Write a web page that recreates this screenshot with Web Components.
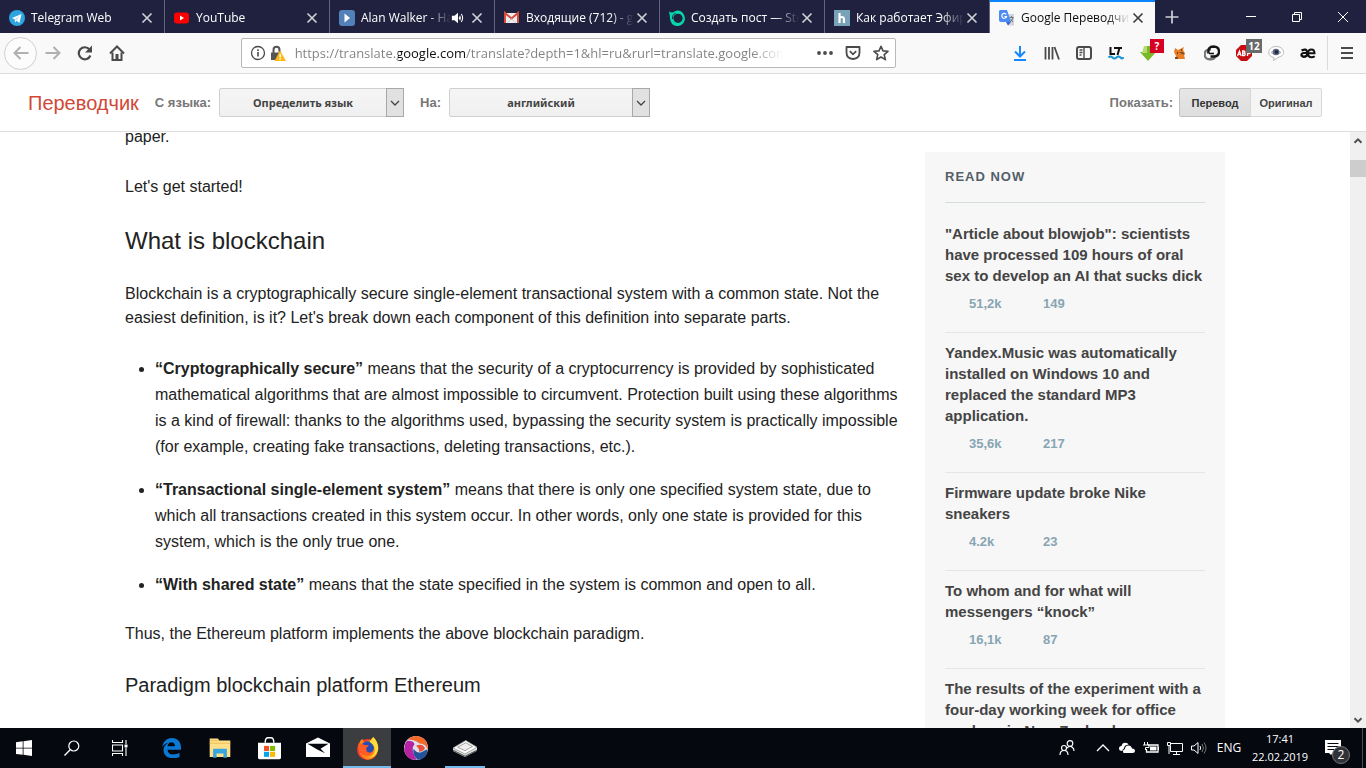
<!DOCTYPE html>
<html lang="ru">
<head>
<meta charset="utf-8">
<title>Google Переводчик</title>
<style>
    html, body { height: 100%; margin: 0; }
    body {
        display: flex;
        flex-direction: column;
        overflow: hidden;
        background: #fff;
        color: #222;
        font-family: "Liberation Sans", Arial, sans-serif;
        --chrome-font: "Open Sans", "Noto Sans", sans-serif;
    }
</style>
</head>
<body>
<tab-strip>
    <browser-tab icon="telegram">Telegram Web</browser-tab>
    <browser-tab icon="youtube">YouTube</browser-tab>
    <browser-tab icon="play" audio>Alan Walker - Ha</browser-tab>
    <browser-tab icon="gmail">Входящие (712) - gr</browser-tab>
    <browser-tab icon="steemit">Создать пост — Ste</browser-tab>
    <browser-tab icon="habr">Как работает Эфир</browser-tab>
    <browser-tab icon="translate" active>Google Переводчик</browser-tab>
</tab-strip>
<nav-bar></nav-bar>
<translate-bar></translate-bar>
<page-view>
    <article-text></article-text>
    <read-now slot="aside">
        <news-item views="51,2k" comments="149">"Article about blowjob": scientists have processed 109 hours of oral sex to develop an AI that sucks dick</news-item>
        <news-item views="35,6k" comments="217">Yandex.Music was automatically installed on Windows 10 and replaced the standard MP3 application.</news-item>
        <news-item views="4.2k" comments="23">Firmware update broke Nike sneakers</news-item>
        <news-item views="16,1k" comments="87">To whom and for what will messengers “knock”</news-item>
        <news-item>The results of the experiment with a four-day working week for office workers in New Zealand</news-item>
    </read-now>
</page-view>
<task-bar></task-bar>

<script>
const ICONS = {
    telegram: '<circle cx="8" cy="8" r="8" fill="#2ca5e0"/><path d="M3 8l9.5-4-2 9-3-2.200-1.500 1.700-.2-3z" fill="#fff"/><path d="M5.800 9.500l5-4.200-3.500 5.200z" fill="#b8dcf0"/>',
    youtube: '<rect y="2.500" width="15" height="11" rx="3" fill="#f00"/><path d="M6 5.500v5l4-2.500z" fill="#fff"/>',
    play: '<rect width="16" height="16" rx="3" fill="#5181b8"/><path d="M5.500 3.500v9l5.500-4.500z" fill="#fff"/>',
    gmail: '<path d="M1 3h13v10H1z" fill="#eee"/><path d="M1 13V3l6.500 5.500L14 3v10" fill="none" stroke="#d54b3d" stroke-width="2"/><path d="M3 13l4.500-4 4.500 4" fill="none" stroke="#ccc"/>',
    steemit: '<path d="M0 1.500Q3.500 3.500 5.500 1.500 10-1 13.500 2.500q3.500 4 2 8.500-2.500 5.500-8 5Q1.500 15 1 8.500.8 5 0 1.500z" fill="#06d6a9"/><circle cx="9" cy="8.300" r="4.600" fill="#20213f"/><path d="M6.500 3Q3 5 3.500 9" fill="none" stroke="#20213f"/>',
    habr: '<path d="M0 0h16v16H0z" fill="#78a2b7"/><path d="M5.500 3v10M5.500 9q.3-2 2.300-2 2.200 0 2.200 2.500V13" fill="none" stroke="#fff" stroke-width="2.200"/>',
    translate: '<path d="M6 4h9v11.500H9z" fill="#d5d5d5"/><path d="M1 0h7l4 12H2q-2 0-2-2V1z" fill="#4d8bf5"/><path d="M7 12h5l-3 3.500z" fill="#3367d6"/><path d="M7.200 4.500a2.400 2.400 0 1 0 .3 2H5.500" fill="none" stroke="#fff" stroke-width="1.200"/><path d="M10.500 7.500h4M12.500 6v1.500M11 12q2.500-1.500 3-4.500M11.500 9l2.500 3" fill="none" stroke="#607988"/>',
    close: '<path d="M3.500 3.500l9 9m0-9l-9 9" stroke="currentColor" stroke-width="1.600"/>',
    plus: '<path d="M8 1.500v13M1.500 8h13" stroke="currentColor" stroke-width="1.700"/>',
    audio: '<path d="M1 5.500h3l4-3.500v12l-4-3.500H1z" fill="currentColor"/><path d="M10 5.500q1.500 2.500 0 5M11.800 3.500q3 4.500 0 9M9.600 7v2" fill="none" stroke="currentColor" stroke-width="1.200"/>',
    minimize: '<path d="M3 7.500h10" stroke="currentColor"/>',
    restore: '<path d="M3.500 5.500h7v7h-7zM5.500 5V3.500h7v7H11" fill="none" stroke="currentColor"/>',
    winclose: '<path d="M3 3l10 10M13 3L3 13" stroke="currentColor"/>',
    back: '<path d="M15.500 8H1.500M7.500 2L1.500 8l6 6" fill="none" stroke="currentColor" stroke-width="2"/>',
    forward: '<path d="M.5 8h14M8.500 2l6 6-6 6" fill="none" stroke="currentColor" stroke-width="2"/>',
    reload: '<path d="M13.400 10.500A6 6 0 1 1 12.500 4.500" fill="none" stroke="currentColor" stroke-width="2.200"/><path d="M15 .5v7H8z" fill="currentColor"/>',
    home: '<path d="M1 8.500L8 1.500l7 7" fill="none" stroke="currentColor" stroke-width="2"/><path d="M3.500 7.500V15h9V7.500" fill="none" stroke="currentColor" stroke-width="2"/><path d="M6.500 9h3v6h-3z" fill="currentColor"/>',
    info: '<circle cx="8" cy="8" r="6.500" fill="none" stroke="currentColor" stroke-width="1.300"/><path d="M8 7v4.500M8 4.300v1.600" stroke="currentColor" stroke-width="1.600"/>',
    lock: '<path d="M3.500 8V5q0-3.200 3-3.200t3 3.200v2" fill="none" stroke="#555" stroke-width="2"/><path d="M1 7.500h9.500v7.500H1z" fill="#555"/><path d="M10 5.500l6 10.500H4.500z" fill="#fcb813"/><path d="M10.200 9v3.500M10.200 13.300v1.500" stroke="#fff" stroke-width="1.400"/>',
    dots: '<g fill="currentColor"><circle cx="2" cy="8" r="1.900"/><circle cx="8" cy="8" r="1.900"/><circle cx="14" cy="8" r="1.900"/></g>',
    pocket: '<path d="M1.500 2h13v5.500q0 6-6.500 6.500-6.500-.5-6.500-6.500z" fill="none" stroke="currentColor" stroke-width="1.800" stroke-linejoin="round"/><path d="M4.800 6.200L8 9.300l3.200-3.100" fill="none" stroke="currentColor" stroke-width="1.800"/>',
    star: '<path d="M8 1.300l2 4.600 5 .4-3.800 3.300 1.200 5L8 12l-4.400 2.600 1.200-5L1 6.300l5-.4z" fill="none" stroke="currentColor" stroke-width="1.600" stroke-linejoin="round"/>',
    download: '<path d="M8 1v10.500M3 6.500L8 11.500l5-5M2 15h12" fill="none" stroke="#1687ff" stroke-width="2"/>',
    library: '<path d="M1.500 2v12.500M5 2v12.500M8.500 2v12.500M10.500 2l4.500 12.500" stroke="currentColor" stroke-width="1.800"/>',
    sidebar: '<rect x="1" y="2" width="14" height="12" rx="2" fill="none" stroke="currentColor" stroke-width="2"/><path d="M8 2v12M3.500 5h3M3.500 7.500h3M3.500 10h2" stroke="currentColor" stroke-width="1.400"/>',
    langtool: '<path d="M2.500 2v7H7M6 3h8M11.500 3l-2 7" fill="none" stroke="#111" stroke-width="2"/><path d="M.5 12.500q2-2 4 0t4 0 4 0 3-.5" fill="none" stroke="#1594d2" stroke-width="2"/>',
    savefrom: '<path d="M4 1h8v6h4l-8 9-8-9h4z" fill="#79b928"/><path d="M4 1h3v7H2z" fill="#b5dc70"/>',
    fox: '<path d="M3 3l3 2 6-3-1 3 2 3-1 2 1 4H3l1-3-2-4z" fill="#e97d24"/><path d="M7 7h4l2 3-3-1zM3 12h3v2H3z" fill="#7b4a2b"/><path d="M9 5h1M5 8h1" stroke="#40281a" stroke-width="1.500"/>',
    link: '<path d="M7 4.500H5.500a4.800 4.800 0 0 0 0 9.800H7q3 0 4-2.500" fill="none" stroke="#777" stroke-width="2.400"/><path d="M4.500 8.500Q3.500 1.500 9.500 1.500q5.500.3 5.500 5 0 5-5.500 5H6.500" fill="none" stroke="#161616" stroke-width="2.400"/><path d="M5 8.500h5" stroke="#161616" stroke-width="1.600"/>',
    stop: '<path d="M5 0h6l5 5v6l-5 5H5l-5-5V5z" fill="#c70d12"/><path d="M1.500 11l2-5 1.700 5M2.400 9.400h2.200M6.700 6v4.500h1.800q1.500-.7 0-2.300 1-1.500-.3-2.200zM6.500 8.200h2M11.500 11V6h2q1.500 1.500 0 2.500h-2" fill="none" stroke="#fff" stroke-width="1.300"/>',
    eye: '<path d="M8 1.500c9 0 10 9.500 3 10.500L5.500 15.500 6 12.500C-2.500 11 0 1.500 8 1.500z" fill="#fff" stroke="#bbb"/><path d="M3 7.500q5-5 10 0-5 4-10 0z" fill="#ddd" stroke="#999" stroke-width=".7"/><circle cx="8" cy="7" r="3.300" fill="#57637f"/><circle cx="8.500" cy="7" r="1.800" fill="#20243d"/>',
    ae: '<path d="M1.500 5.500Q7 3 7 7v4.500M7 8H3.500Q1 8.500 1.500 10.500 3.500 13 7 10.500" fill="none" stroke="#111" stroke-width="2.200"/><path d="M8.500 8.300h6Q14.500 4.500 11.500 4.500 8 4.500 8 8.300q0 4 3.500 4 2 0 3.200-1" fill="none" stroke="#111" stroke-width="2"/>',
    menu: '<path d="M2 3h12M2 8h12M2 13h12" stroke="currentColor" stroke-width="1.800"/>',
    chevdown: '<path d="M4 6l4 4 4-4" fill="none" stroke="currentColor" stroke-width="1.300"/>',
    scrollup: '<path d="M4.500 10.800L8 7.300l3.500 3.500" fill="none" stroke="currentColor" stroke-width="2"/>',
    scrolldown: '<path d="M4.500 6.200L8 9.700l3.500-3.500" fill="none" stroke="currentColor" stroke-width="2"/>',
    windows: '<path d="M0 2.300l6.700-1v6.400H0zM7.500 1.200L16 0v7.700H7.500zM0 8.400h6.700v6.400L0 13.900zM7.500 8.400H16V16l-8.500-1.200z" fill="#fff"/>',
    search: '<circle cx="9.800" cy="6" r="5" fill="none" stroke="#fff" stroke-width="1.200"/><path d="M6.200 9.800L.5 15.500" stroke="#fff" stroke-width="1.400"/>',
    taskview: '<path d="M.5 0v2.500h10V0M.5 16v-2.500h10V16M.5 5h10v6H.5zM14 0v4M14 8v8" fill="none" stroke="#fff" stroke-width="1.100"/><path d="M12.500 4.500h3v3h-3z" fill="#fff"/>',
    edge: '<path d="M.8 7.200C2 2.500 5 0 8.700 0 13.500 0 16 3.500 16 7.500v1.800H5.200c.2 2.700 2 3.900 4.600 3.900 2 0 3.800-.6 5-1.400v3.300c-1.500.7-3.500 1-5.200 1C5 16.100 2 13.300 2 9.500 2 6.500 4 4.700 6 3.700 3.800 4 2 5.200.8 7.200zM5.200 6.500h6C11.200 4.500 10 3.300 8.300 3.300c-1.700 0-2.800 1.400-3.100 3.200z" fill="#0b78d4"/>',
    folder: '<path d="M.5 1h6l1 1.500h8v12H.5z" fill="#ffdf88"/><path d="M1 2.500h6M.5 4.500h15" stroke="#e9b94e" stroke-width=".6"/><path d="M3 15V8.500h10V15H10.500v-3h-5v3z" fill="#35a6de"/>',
    store: '<path d="M0 4h16v10.500q0 1-1 1H1q-1 0-1-1z" fill="#fff"/><path d="M5 4Q5 .5 7 .5h2Q11 .5 11 4" fill="none" stroke="#fff"/><path d="M4.200 6.200h3.500v3.500H4.200z" fill="#f25022"/><path d="M8.400 6.200h3.500v3.500H8.400z" fill="#7fba00"/><path d="M4.200 10.300h3.500v3.500H4.200z" fill="#00a4ef"/><path d="M8.400 10.300h3.500v3.500H8.400z" fill="#ffb900"/>',
    mail: '<path d="M0 5l8-4 8 4v9H0z" fill="#fff"/><path d="M1 5.200h14L9.700 8.500l3 3L7.500 9z" fill="#05080f"/>',
    firefox: '<circle cx="8" cy="8.700" r="7.300" fill="#f23a33"/><path d="M2 5Q3 2 4.500 1.300 4.500 3 6 3.500L10 2 12 0q4 4 3.300 9.500Q13 16.500 7 15.500 1 13 2 5z" fill="#ff8b16"/><circle cx="8" cy="7.500" r="4.500" fill="#274bb2"/><path d="M12 0q4.500 5 3.200 9.500-2 5-6.700 5 5-2 4.500-6-.2-3-3.500-5z" fill="#ffdf36"/><path d="M2 4l4 1.500 3 .3-2 2 .5 2.200q2 1.500 3.500 0 0 3-4 3Q1.500 12.500 1.500 6z" fill="#ff5b24"/>',
    swirl: '<circle cx="8" cy="8" r="8" fill="#dee1ed"/><path d="M2.500 2.500Q8-2.500 14 2.500q2.500 3 1.800 6.500Q14.500 5 10.500 5 7 2 2.500 2.500z" fill="#f4692a"/><path d="M2 3.200Q6.500 3 7 5.500 4 9 8.500 15.800 2 16.500.3 10-.3 6 2 3.200z" fill="#b722a2"/><path d="M6.500 8.500q1.500 3 5 2.300l4-2q.3 6.700-6.500 7-4-4-2.500-7.300z" fill="#24539b"/><path d="M8 6.500Q12 4.500 14 8q-1 2.500-4 2.500.5-2-2-4z" fill="#e75238"/>',
    drive: '<path d="M0 8L8.500 3 16 7.500v2.300L8 14 0 10z" fill="#e8e8e8"/><path d="M0 8L8.500 3 16 7.500 8 12z" fill="#fff" stroke="#888" stroke-width=".5"/><path d="M3 7.500L8.500 4.500 13 7 8 9.800z" fill="#eee" stroke="#888" stroke-width=".5"/><path d="M0 9.500l8 4 8-4" fill="none" stroke="#555" stroke-width=".7"/>',
    people: '<g fill="none" stroke="#fff" stroke-width="1.200"><circle cx="5" cy="8" r="2.500"/><path d="M1 15q0-4.500 4-4.500T9 15"/><circle cx="11" cy="3.500" r="2.800"/><path d="M8 8q3-3 5.500-.5 1.500 1 1.500 3.500"/></g>',
    chevup: '<path d="M2 11l6-6 6 6" fill="none" stroke="#fff" stroke-width="1.300"/>',
    cloud: '<path d="M3.500 11Q0 11 0 8.500 0 6 2.500 6q1-4 5-3 1.500.3 2 1.500Q5 5 5 8.500 3 9 3.500 11z" fill="#fff"/><path d="M4.500 13Q3 10 6 9q0-3.500 3.500-3.500 2.700 0 3.500 3 3 0 3 2.500 0 2-2.500 2z" fill="#fff"/>',
    battery: '<path d="M5 5h10v7H3.500V9M15.500 7v3" fill="none" stroke="#fff" stroke-width="1.300"/><path d="M7 6.500h6.500v4H7z" fill="#fff"/><path d="M1.500 2v3M4.500 2v3M0 5h6v2.500H2.500V10" fill="none" stroke="#fff"/>',
    network: '<path d="M4 3.500h11.500v8H3.500V6M9.500 11.500V14M6 14.500h7M.5 2.500h3v3h-3zM2 5.500V14" fill="none" stroke="#fff"/>',
    volume: '<path d="M.5 6H3l4-3.500v11L3 10H.5z" fill="none" stroke="#fff"/><path d="M9 6q1.300 2 0 4" fill="none" stroke="#fff"/><path d="M11 4q3 4 0 8M13 2.500q4 5.500 0 11" fill="none" stroke="#777"/>',
    notes: '<path d="M0 0h16v13H8l-2 2-2-2H0z" fill="#fff"/><path d="M2.500 3.500h11M2.500 6.500h11M2.500 9.500h7" stroke="#05080f"/>'
};

class UiIcon extends HTMLElement {
    constructor() {
        super();
        this.attachShadow({ mode: 'open' });
    }

    connectedCallback() {
        const size = this.getAttribute('size') || 16;
        this.shadowRoot.innerHTML = `
            <style>
                :host { display: inline-block; flex: none; width: ${size}px; height: ${size}px; }
                svg { display: block; }
            </style>
            <svg viewBox="0 0 16 16" width="${size}" height="${size}" aria-hidden="true">${ICONS[this.getAttribute('name')]}</svg>
        `;
    }
}

class TabStrip extends HTMLElement {
    constructor() {
        super();
        this.attachShadow({ mode: 'open' });
        this.shadowRoot.innerHTML = `
            <style>
                :host {
                    display: flex;
                    flex: none;
                    height: 33px;
                    background: #20213f;
                    color: #fff;
                }
                button {
                    width: 46px;
                    padding: 0;
                    border: none;
                    background: none;
                    color: inherit;
                }
                .new { width: 34px; color: #d0d0d8; }
                .window { display: flex; margin-left: auto; }
                button ui-icon { vertical-align: middle; }
            </style>
            <slot></slot>
            <button class="new" aria-label="Новая вкладка"><ui-icon name="plus"></ui-icon></button>
            <div class="window">
                <button aria-label="Свернуть"><ui-icon name="minimize"></ui-icon></button>
                <button aria-label="Развернуть"><ui-icon name="restore"></ui-icon></button>
                <button aria-label="Закрыть"><ui-icon name="winclose"></ui-icon></button>
            </div>
        `;
    }
}

class BrowserTab extends HTMLElement {
    constructor() {
        super();
        this.attachShadow({ mode: 'open' });
    }

    connectedCallback() {
        this.shadowRoot.innerHTML = `
            <style>
                :host {
                    display: flex;
                    align-items: center;
                    flex: 0 1 165px;
                    min-width: 0;
                    box-sizing: border-box;
                    padding: 2px 9px 0;
                    border-right: 1px solid #62637c;
                    font: 12px/20px var(--chrome-font);
                    color: #fff;
                }
                :host([active]) {
                    padding-top: 0;
                    border-top: 2px solid #0a84ff;
                    border-right: none;
                    background: #f9f9fa;
                    color: #0c0c0d;
                }
                .title {
                    flex: 1;
                    min-width: 0;
                    margin-left: 6px;
                    overflow: hidden;
                    white-space: nowrap;
                    mask-image: linear-gradient(to left, transparent, #000 24px);
                }
                button {
                    flex: none;
                    width: 16px;
                    height: 16px;
                    padding: 0;
                    border: none;
                    background: none;
                    color: inherit;
                    opacity: .8;
                }
                button ui-icon { display: block; }
                ui-icon[name="audio"] { margin-right: 4px; }
            </style>
            <ui-icon name="${this.getAttribute('icon')}"></ui-icon>
            <span class="title"><slot></slot></span>
            ${this.hasAttribute('audio') ? '<ui-icon name="audio" size="14"></ui-icon>' : ''}
            <button aria-label="Закрыть вкладку"><ui-icon name="close"></ui-icon></button>
        `;
    }
}

class NavBar extends HTMLElement {
    constructor() {
        super();
        this.attachShadow({ mode: 'open' });
        this.shadowRoot.innerHTML = `
            <style>
                :host {
                    display: flex;
                    flex: none;
                    align-items: center;
                    height: 40px;
                    padding: 0 3px 0 4px;
                    border-bottom: 1px solid #dcdcdc;
                    background: #f9f9fa;
                    color: #4a4a4c;
                }
                button {
                    display: grid;
                    place-items: center;
                    position: relative;
                    flex: none;
                    width: 32px;
                    height: 34px;
                    padding: 0;
                    border: none;
                    background: none;
                    color: inherit;
                }
                .back {
                    box-sizing: border-box;
                    width: 33px;
                    height: 33px;
                    border: 1px solid #cfcfcf;
                    border-radius: 50%;
                    background: #fcfcfc;
                }
                .off { color: #b0b0b1; }
                .space { flex: 1; }
                .url {
                    display: flex;
                    align-items: center;
                    flex: 6;
                    gap: 4px;
                    min-width: 0;
                    box-sizing: border-box;
                    height: 30px;
                    padding: 0 0 0 8px;
                    border: 1px solid #b8b8b8;
                    border-radius: 2px;
                    background: #fff;
                }
                .url input {
                    flex: 1;
                    min-width: 0;
                    margin: 0 24px 0 5px;
                    padding: 0;
                    border: none;
                    outline: none;
                    font: 13px/24px var(--chrome-font);
                    /* the host part of the address is drawn darker */
                    background: linear-gradient(to right, #808080 103px, #0c0c0d 103px 171px, #808080 171px);
                    background-clip: text;
                    -webkit-background-clip: text;
                    -webkit-text-fill-color: transparent;
                    mask-image: linear-gradient(to left, transparent, #000 32px);
                }
                .url button { width: 28px; height: 28px; }
                .url .end { display: flex; }
                .badge {
                    position: absolute;
                    top: 3px;
                    left: 18px;
                    min-width: 14px;
                    font: bold 10px/14px var(--chrome-font);
                    text-align: center;
                    background: #d70022;
                    color: #fff;
                }
                .grey { background: #686a6b; min-width: 16px; }
                .sep { width: 1px; height: 34px; margin: 0 3px; background: #dadada; }
            </style>
            <button class="back off" aria-label="Назад"><ui-icon name="back"></ui-icon></button>
            <button class="off" aria-label="Вперёд"><ui-icon name="forward"></ui-icon></button>
            <button aria-label="Обновить"><ui-icon name="reload"></ui-icon></button>
            <button aria-label="Домой"><ui-icon name="home"></ui-icon></button>
            <span class="space"></span>
            <div class="url">
                <ui-icon name="info"></ui-icon>
                <ui-icon name="lock"></ui-icon>
                <input type="text" aria-label="Адрес" value="https://translate.google.com/translate?depth=1&amp;hl=ru&amp;rurl=translate.google.com">
                <span class="end">
                    <button aria-label="Действия"><ui-icon name="dots"></ui-icon></button>
                    <button aria-label="Pocket"><ui-icon name="pocket"></ui-icon></button>
                    <button aria-label="Закладка"><ui-icon name="star"></ui-icon></button>
                </span>
            </div>
            <span class="space"></span>
            <button aria-label="Загрузки"><ui-icon name="download"></ui-icon></button>
            <button aria-label="Библиотека"><ui-icon name="library"></ui-icon></button>
            <button aria-label="Боковая панель"><ui-icon name="sidebar"></ui-icon></button>
            <button aria-label="LanguageTool"><ui-icon name="langtool"></ui-icon></button>
            <button aria-label="SaveFrom"><ui-icon name="savefrom"></ui-icon><span class="badge">?</span></button>
            <button aria-label="MetaMask"><ui-icon name="fox"></ui-icon></button>
            <button aria-label="Ссылки"><ui-icon name="link"></ui-icon></button>
            <button aria-label="Adblock"><ui-icon name="stop"></ui-icon><span class="badge grey">12</span></button>
            <button aria-label="Просмотр"><ui-icon name="eye"></ui-icon></button>
            <button aria-label="Словарь"><ui-icon name="ae"></ui-icon></button>
            <span class="sep"></span>
            <button aria-label="Меню"><ui-icon name="menu"></ui-icon></button>
        `;
    }
}

class TranslateBar extends HTMLElement {
    constructor() {
        super();
        this.attachShadow({ mode: 'open' });
        this.shadowRoot.innerHTML = `
            <style>
                :host {
                    display: flex;
                    flex: none;
                    align-items: center;
                    height: 57px;
                    padding: 0 44px 0 28px;
                    border-bottom: 1px solid #ddd;
                    background: #fff;
                    white-space: nowrap;
                }
                .logo {
                    margin-right: 16px;
                    font-size: 20px;
                    line-height: 24px;
                    text-decoration: none;
                    color: #d14836;
                }
                label, .label {
                    margin-right: 8px;
                    font: bold 13px/18px "Liberation Sans", Arial, sans-serif;
                    color: #777;
                }
                .label { margin-right: 6px; }
                .select { display: grid; width: 185px; margin-right: 16px; }
                .wide { width: 201px; }
                .select > * { grid-area: 1 / 1; }
                select {
                    appearance: none;
                    box-sizing: border-box;
                    width: 100%;
                    height: 29px;
                    padding: 0 17px 0 0;
                    border: 1px solid #d0d0d0;
                    border-radius: 2px;
                    background: linear-gradient(#f5f5f5, #f0f0f0);
                    font: bold 11px/16px "Noto Sans", sans-serif;
                    text-align: center;
                    text-align-last: center;
                    color: #444;
                }
                .arrow {
                    display: grid;
                    place-items: center;
                    justify-self: end;
                    box-sizing: border-box;
                    width: 18px;
                    height: 29px;
                    border: 1px solid #a8a8a8;
                    background: #e1e1e1;
                    color: #444;
                    pointer-events: none;
                }
                .show { display: flex; align-items: center; margin-left: auto; }
                button {
                    box-sizing: border-box;
                    width: 72px;
                    height: 29px;
                    padding: 0;
                    border: 1px solid #d8d8d8;
                    border-radius: 0 2px 2px 0;
                    background: #f5f5f5;
                    font: bold 11px/16px "Liberation Sans", Arial, sans-serif;
                    color: #444;
                }
                .on {
                    margin-right: -1px;
                    border-color: #c0c0c0;
                    border-radius: 2px 0 0 2px;
                    background: linear-gradient(#e6e6e6, #dedede);
                    color: #333;
                }
            </style>
            <a class="logo" href="#">Переводчик</a>
            <label for="from">С языка:</label>
            <span class="select">
                <select id="from"><option>Определить язык</option></select>
                <span class="arrow"><ui-icon name="chevdown"></ui-icon></span>
            </span>
            <label for="to">На:</label>
            <span class="select wide">
                <select id="to"><option>английский</option></select>
                <span class="arrow"><ui-icon name="chevdown"></ui-icon></span>
            </span>
            <div class="show">
                <span class="label">Показать:</span>
                <button class="on">Перевод</button>
                <button>Оригинал</button>
            </div>
        `;
    }
}

class PageView extends HTMLElement {
    constructor() {
        super();
        this.attachShadow({ mode: 'open' });
        this.shadowRoot.innerHTML = `
            <style>
                :host {
                    display: flex;
                    flex: 1;
                    min-height: 0;
                    overflow: hidden;
                }
                .content { flex: 1; min-width: 0; overflow: hidden; }
                .columns {
                    display: grid;
                    grid-template-columns: minmax(0, 1fr) 300px;
                    gap: 24px;
                    max-width: 1100px;
                    margin: 0 auto;
                }
                .scroll {
                    display: flex;
                    flex-direction: column;
                    width: 16px;
                    background: #f0f0f0;
                    color: #505050;
                }
                .thumb { height: 17px; margin-top: 12px; background: #cdcdcd; }
                .scroll ui-icon:last-child { margin-top: auto; }
            </style>
            <div class="content">
                <div class="columns">
                    <slot></slot>
                    <slot name="aside"></slot>
                </div>
            </div>
            <div class="scroll">
                <ui-icon name="scrollup"></ui-icon>
                <div class="thumb"></div>
                <ui-icon name="scrolldown"></ui-icon>
            </div>
        `;
    }
}

class ArticleText extends HTMLElement {
    constructor() {
        super();
        this.attachShadow({ mode: 'open' });
        this.shadowRoot.innerHTML = `
            <style>
                :host {
                    display: block;
                    margin-top: -7px;
                    font-size: 16px;
                    line-height: 24px;
                }
                p { margin: 0 0 26px; }
                h2, h3 { margin: 0 0 25px; font-weight: normal; }
                h2 { font-size: 24px; line-height: 32px; }
                h3 { font-size: 20px; line-height: 26px; }
                ul { margin: 0 0 24px; padding-left: 30px; line-height: 26px; }
                li { margin-bottom: 17px; }
            </style>
            <p>paper.</p>
            <p>Let's get started!</p>
            <h2>What is blockchain</h2>
            <p>Blockchain is a cryptographically secure single-element transactional system with a common state. Not the easiest definition, is it? Let's break down each component of this definition into separate parts.</p>
            <ul>
                <li><b>“Cryptographically secure”</b> means that the security of a cryptocurrency is provided by sophisticated mathematical algorithms that are almost impossible to circumvent. Protection built using these algorithms is a kind of firewall: thanks to the algorithms used, bypassing the security system is practically impossible (for example, creating fake transactions, deleting transactions, etc.).</li>
                <li><b>“Transactional single-element system”</b> means that there is only one specified system state, due to which all transactions created in this system occur. In other words, only one state is provided for this system, which is the only true one.</li>
                <li><b>“With shared state”</b> means that the state specified in the system is common and open to all.</li>
            </ul>
            <p>Thus, the Ethereum platform implements the above blockchain paradigm.</p>
            <h3>Paradigm blockchain platform Ethereum</h3>
        `;
    }
}

class ReadNow extends HTMLElement {
    constructor() {
        super();
        this.attachShadow({ mode: 'open' });
        this.shadowRoot.innerHTML = `
            <style>
                :host {
                    display: block;
                    margin-top: 20px;
                    padding: 15px 20px;
                    background: #f7f7f7;
                }
                h4 {
                    margin: 0 0 11px;
                    padding-bottom: 15px;
                    border-bottom: 1px solid #d5dddf;
                    font-size: 13px;
                    line-height: 20px;
                    letter-spacing: 1px;
                    text-transform: uppercase;
                    color: #545f68;
                }
            </style>
            <h4>Read now</h4>
            <slot></slot>
        `;
    }
}

class NewsItem extends HTMLElement {
    constructor() {
        super();
        this.attachShadow({ mode: 'open' });
    }

    connectedCallback() {
        const views = this.getAttribute('views');
        this.shadowRoot.innerHTML = `
            <style>
                :host {
                    display: block;
                    padding: 9px 0 19px;
                    border-bottom: 1px solid #e3e6e8;
                    font-weight: bold;
                }
                a {
                    display: block;
                    margin-bottom: 9px;
                    font-size: 15px;
                    line-height: 21px;
                    text-decoration: none;
                    color: #444;
                }
                .stats {
                    display: grid;
                    grid-template-columns: 74px 74px;
                    padding-left: 24px;
                    font-size: 13px;
                    line-height: 18px;
                    color: #87a5b3;
                }
            </style>
            <a href="#"><slot></slot></a>
            ${views ? `<div class="stats"><span>${views}</span><span>${this.getAttribute('comments')}</span></div>` : ''}
        `;
    }
}

class TaskBar extends HTMLElement {
    constructor() {
        super();
        this.attachShadow({ mode: 'open' });
        this.shadowRoot.innerHTML = `
            <style>
                :host {
                    display: flex;
                    flex: none;
                    height: 40px;
                    background: #05080f;
                    color: #fff;
                    font: 12px/18px var(--chrome-font);
                }
                div { display: flex; }
                button {
                    display: grid;
                    place-items: center;
                    position: relative;
                    width: 48px;
                    padding: 0;
                    border: none;
                    background: none;
                    color: inherit;
                    font: inherit;
                }
                .apps { gap: 1px; margin-left: 3px; }
                .active { background: #3b3d41; box-shadow: inset 0 -2px #76b9ed; }
                .open { width: 40px; margin: 0 4px; box-shadow: inset 0 -2px #76b9ed; }
                .tray { margin-left: auto; }
                .tray button { width: 24px; }
                .tray .people { width: 48px; }
                .tray .lang { width: 36px; }
                .tray .clock {
                    width: 66px;
                    font-size: 11px;
                    align-content: center;
                }
                .tray .notes {
                    width: 50px;
                    margin-right: 3px;
                    padding-right: 10px;
                    border-right: 1px solid #4a4c52;
                }
                .count {
                    position: absolute;
                    right: 12px;
                    bottom: 4px;
                    width: 16px;
                    border: 1px solid #777;
                    border-radius: 50%;
                    line-height: 16px;
                    background: #303237;
                }
            </style>
            <div>
                <button aria-label="Пуск"><ui-icon name="windows"></ui-icon></button>
                <button aria-label="Поиск"><ui-icon name="search"></ui-icon></button>
                <button aria-label="Представление задач"><ui-icon name="taskview"></ui-icon></button>
            </div>
            <div class="apps">
                <button aria-label="Edge"><ui-icon name="edge" size="20"></ui-icon></button>
                <button aria-label="Проводник"><ui-icon name="folder" size="22"></ui-icon></button>
                <button aria-label="Store"><ui-icon name="store" size="23"></ui-icon></button>
                <button aria-label="Почта"><ui-icon name="mail" size="24"></ui-icon></button>
                <button class="active" aria-label="Firefox"><ui-icon name="firefox" size="23"></ui-icon></button>
                <button aria-label="Браузер"><ui-icon name="swirl" size="24"></ui-icon></button>
                <button class="open" aria-label="Диск"><ui-icon name="drive" size="24"></ui-icon></button>
            </div>
            <div class="tray">
                <button class="people" aria-label="Люди"><ui-icon name="people"></ui-icon></button>
                <button aria-label="Скрытые значки"><ui-icon name="chevup"></ui-icon></button>
                <button aria-label="OneDrive"><ui-icon name="cloud"></ui-icon></button>
                <button aria-label="Батарея"><ui-icon name="battery"></ui-icon></button>
                <button aria-label="Сеть"><ui-icon name="network"></ui-icon></button>
                <button aria-label="Громкость"><ui-icon name="volume"></ui-icon></button>
                <button class="lang">ENG</button>
                <button class="clock"><span>17:41</span><span>22.02.2019</span></button>
                <button class="notes" aria-label="Уведомления"><ui-icon name="notes"></ui-icon><span class="count">2</span></button>
            </div>
        `;
    }
}

customElements.define('ui-icon', UiIcon);
customElements.define('tab-strip', TabStrip);
customElements.define('browser-tab', BrowserTab);
customElements.define('nav-bar', NavBar);
customElements.define('translate-bar', TranslateBar);
customElements.define('page-view', PageView);
customElements.define('article-text', ArticleText);
customElements.define('read-now', ReadNow);
customElements.define('news-item', NewsItem);
customElements.define('task-bar', TaskBar);
</script>
</body>
</html>
